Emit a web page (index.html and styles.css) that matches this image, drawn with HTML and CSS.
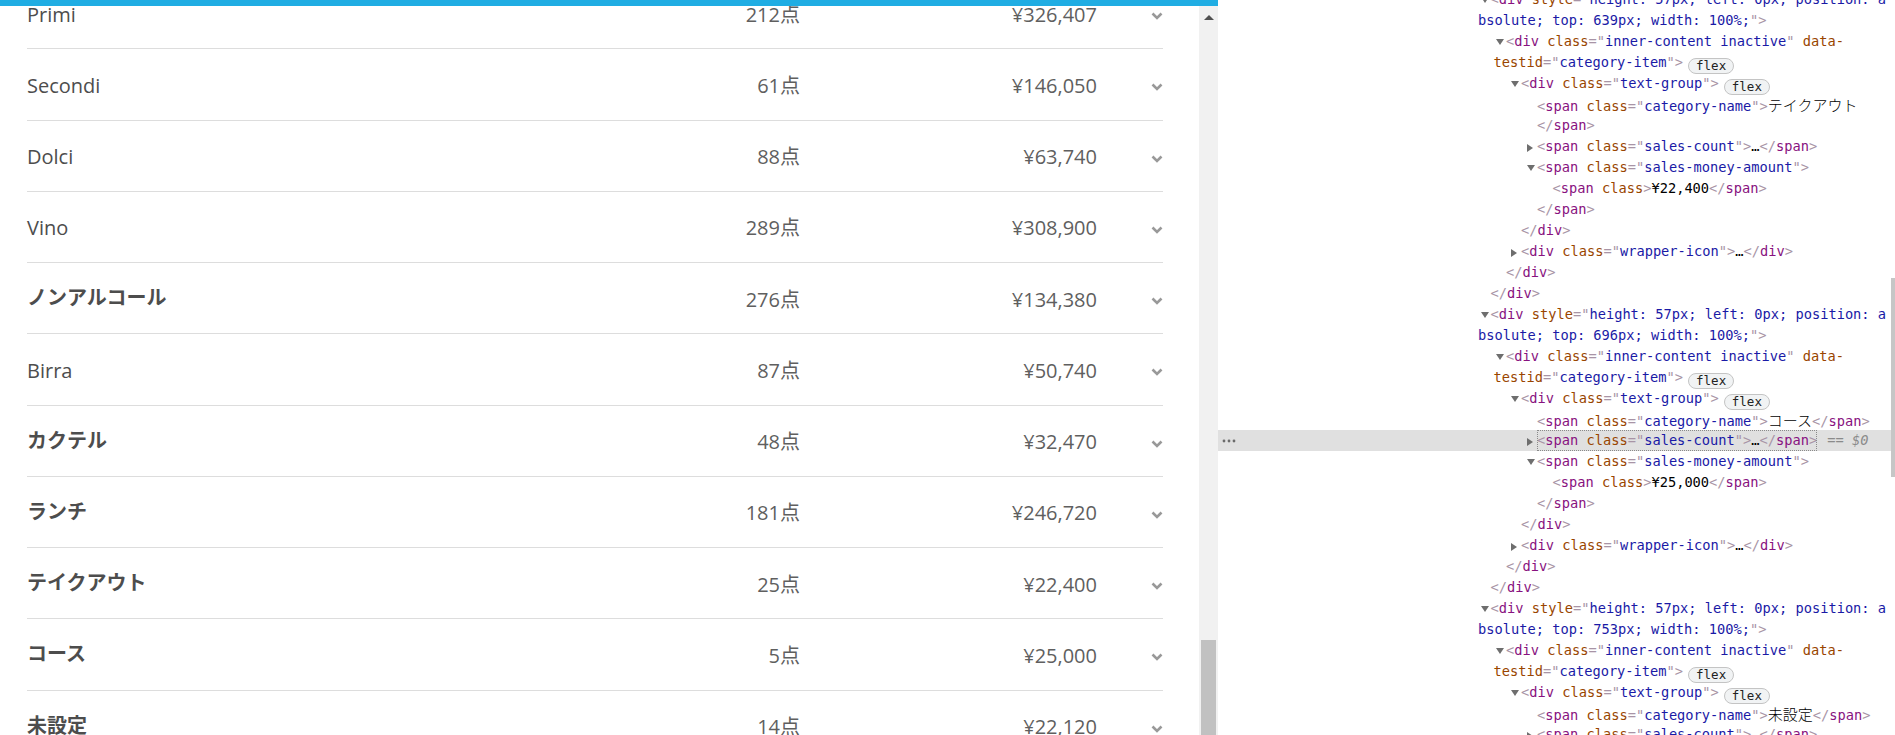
FILE: index.html
```html
<!DOCTYPE html>
<html lang="ja">
<head>
<meta charset="utf-8">
<title>Categories</title>
<link rel="stylesheet" href="styles.css">
</head>
<body>
<div class="app">
  <section class="pane-list">
    <div class="topbar"></div>
    <div class="list-body">
      <div class="list-viewport">
        <ul class="category-list">
          <li class="category-row"><span class="cat-name">Primi</span><span class="cat-count">212点</span><span class="cat-amount">¥326,407</span><span class="cat-icon"><svg width="12" height="8" viewBox="0 0 12 8"><polyline points="1.5,1.5 6,6 10.5,1.5" /></svg></span></li>
          <li class="category-row"><span class="cat-name">Secondi</span><span class="cat-count">61点</span><span class="cat-amount">¥146,050</span><span class="cat-icon"><svg width="12" height="8" viewBox="0 0 12 8"><polyline points="1.5,1.5 6,6 10.5,1.5" /></svg></span></li>
          <li class="category-row"><span class="cat-name">Dolci</span><span class="cat-count">88点</span><span class="cat-amount">¥63,740</span><span class="cat-icon"><svg width="12" height="8" viewBox="0 0 12 8"><polyline points="1.5,1.5 6,6 10.5,1.5" /></svg></span></li>
          <li class="category-row"><span class="cat-name">Vino</span><span class="cat-count">289点</span><span class="cat-amount">¥308,900</span><span class="cat-icon"><svg width="12" height="8" viewBox="0 0 12 8"><polyline points="1.5,1.5 6,6 10.5,1.5" /></svg></span></li>
          <li class="category-row"><span class="cat-name cat-name--ja">ノンアルコール</span><span class="cat-count">276点</span><span class="cat-amount">¥134,380</span><span class="cat-icon"><svg width="12" height="8" viewBox="0 0 12 8"><polyline points="1.5,1.5 6,6 10.5,1.5" /></svg></span></li>
          <li class="category-row"><span class="cat-name">Birra</span><span class="cat-count">87点</span><span class="cat-amount">¥50,740</span><span class="cat-icon"><svg width="12" height="8" viewBox="0 0 12 8"><polyline points="1.5,1.5 6,6 10.5,1.5" /></svg></span></li>
          <li class="category-row"><span class="cat-name cat-name--ja">カクテル</span><span class="cat-count">48点</span><span class="cat-amount">¥32,470</span><span class="cat-icon"><svg width="12" height="8" viewBox="0 0 12 8"><polyline points="1.5,1.5 6,6 10.5,1.5" /></svg></span></li>
          <li class="category-row"><span class="cat-name cat-name--ja">ランチ</span><span class="cat-count">181点</span><span class="cat-amount">¥246,720</span><span class="cat-icon"><svg width="12" height="8" viewBox="0 0 12 8"><polyline points="1.5,1.5 6,6 10.5,1.5" /></svg></span></li>
          <li class="category-row"><span class="cat-name cat-name--ja">テイクアウト</span><span class="cat-count">25点</span><span class="cat-amount">¥22,400</span><span class="cat-icon"><svg width="12" height="8" viewBox="0 0 12 8"><polyline points="1.5,1.5 6,6 10.5,1.5" /></svg></span></li>
          <li class="category-row"><span class="cat-name cat-name--ja">コース</span><span class="cat-count">5点</span><span class="cat-amount">¥25,000</span><span class="cat-icon"><svg width="12" height="8" viewBox="0 0 12 8"><polyline points="1.5,1.5 6,6 10.5,1.5" /></svg></span></li>
          <li class="category-row"><span class="cat-name cat-name--ja">未設定</span><span class="cat-count">14点</span><span class="cat-amount">¥22,120</span><span class="cat-icon"><svg width="12" height="8" viewBox="0 0 12 8"><polyline points="1.5,1.5 6,6 10.5,1.5" /></svg></span></li>
        </ul>
      </div>
      <div class="scrollbar">
        <div class="sb-button"><svg width="10" height="5" viewBox="0 0 10 5"><polygon points="0,5 5,0 10,5" /></svg></div>
        <div class="sb-space"></div>
        <div class="sb-thumb"></div>
      </div>
    </div>
  </section>

  <section class="pane-devtools">
    <div class="dt-code">
<div class="dt-line lv-a"><span class="tw"><svg width="8" height="6" viewBox="0 0 8 6"><polygon points="0,0 8,0 4,6"/></svg></span><span class="b">&lt;</span><span class="t">div</span> <span class="an">style</span><span class="b">="</span><span class="av">height: 57px; left: 0px; position: a</span></div>
<div class="dt-line lv-aw"><span class="av">bsolute; top: 639px; width: 100%;</span><span class="b">"&gt;</span></div>
<div class="dt-line lv-b"><span class="tw"><svg width="8" height="6" viewBox="0 0 8 6"><polygon points="0,0 8,0 4,6"/></svg></span><span class="b">&lt;</span><span class="t">div</span> <span class="an">class</span><span class="b">="</span><span class="av">inner-content inactive</span><span class="b">"</span> <span class="an">data-</span></div>
<div class="dt-line lv-bw"><span class="an">testid</span><span class="b">="</span><span class="av">category-item</span><span class="b">"&gt;</span><span class="badge">flex</span></div>
<div class="dt-line lv-c"><span class="tw"><svg width="8" height="6" viewBox="0 0 8 6"><polygon points="0,0 8,0 4,6"/></svg></span><span class="b">&lt;</span><span class="t">div</span> <span class="an">class</span><span class="b">="</span><span class="av">text-group</span><span class="b">"&gt;</span><span class="badge">flex</span></div>
<div class="dt-line lv-d"><span class="b">&lt;</span><span class="t">span</span> <span class="an">class</span><span class="b">="</span><span class="av">category-name</span><span class="b">"&gt;</span><span class="tx ja">テイクアウト</span></div>
<div class="dt-line lv-d"><span class="b">&lt;/</span><span class="t">span</span><span class="b">&gt;</span></div>
<div class="dt-line lv-d"><span class="tw"><svg width="6" height="8" viewBox="0 0 6 8"><polygon points="0,0 6,4 0,8"/></svg></span><span class="b">&lt;</span><span class="t">span</span> <span class="an">class</span><span class="b">="</span><span class="av">sales-count</span><span class="b">"&gt;</span><span class="tx">…</span><span class="b">&lt;/</span><span class="t">span</span><span class="b">&gt;</span></div>
<div class="dt-line lv-d"><span class="tw"><svg width="8" height="6" viewBox="0 0 8 6"><polygon points="0,0 8,0 4,6"/></svg></span><span class="b">&lt;</span><span class="t">span</span> <span class="an">class</span><span class="b">="</span><span class="av">sales-money-amount</span><span class="b">"&gt;</span></div>
<div class="dt-line lv-e"><span class="b">&lt;</span><span class="t">span</span> <span class="an">class</span><span class="b">&gt;</span><span class="tx">¥22,400</span><span class="b">&lt;/</span><span class="t">span</span><span class="b">&gt;</span></div>
<div class="dt-line lv-d"><span class="b">&lt;/</span><span class="t">span</span><span class="b">&gt;</span></div>
<div class="dt-line lv-c"><span class="b">&lt;/</span><span class="t">div</span><span class="b">&gt;</span></div>
<div class="dt-line lv-c"><span class="tw"><svg width="6" height="8" viewBox="0 0 6 8"><polygon points="0,0 6,4 0,8"/></svg></span><span class="b">&lt;</span><span class="t">div</span> <span class="an">class</span><span class="b">="</span><span class="av">wrapper-icon</span><span class="b">"&gt;</span><span class="tx">…</span><span class="b">&lt;/</span><span class="t">div</span><span class="b">&gt;</span></div>
<div class="dt-line lv-b"><span class="b">&lt;/</span><span class="t">div</span><span class="b">&gt;</span></div>
<div class="dt-line lv-a"><span class="b">&lt;/</span><span class="t">div</span><span class="b">&gt;</span></div>
<div class="dt-line lv-a"><span class="tw"><svg width="8" height="6" viewBox="0 0 8 6"><polygon points="0,0 8,0 4,6"/></svg></span><span class="b">&lt;</span><span class="t">div</span> <span class="an">style</span><span class="b">="</span><span class="av">height: 57px; left: 0px; position: a</span></div>
<div class="dt-line lv-aw"><span class="av">bsolute; top: 696px; width: 100%;</span><span class="b">"&gt;</span></div>
<div class="dt-line lv-b"><span class="tw"><svg width="8" height="6" viewBox="0 0 8 6"><polygon points="0,0 8,0 4,6"/></svg></span><span class="b">&lt;</span><span class="t">div</span> <span class="an">class</span><span class="b">="</span><span class="av">inner-content inactive</span><span class="b">"</span> <span class="an">data-</span></div>
<div class="dt-line lv-bw"><span class="an">testid</span><span class="b">="</span><span class="av">category-item</span><span class="b">"&gt;</span><span class="badge">flex</span></div>
<div class="dt-line lv-c"><span class="tw"><svg width="8" height="6" viewBox="0 0 8 6"><polygon points="0,0 8,0 4,6"/></svg></span><span class="b">&lt;</span><span class="t">div</span> <span class="an">class</span><span class="b">="</span><span class="av">text-group</span><span class="b">"&gt;</span><span class="badge">flex</span></div>
<div class="dt-line lv-d"><span class="b">&lt;</span><span class="t">span</span> <span class="an">class</span><span class="b">="</span><span class="av">category-name</span><span class="b">"&gt;</span><span class="tx ja">コース</span><span class="b">&lt;/</span><span class="t">span</span><span class="b">&gt;</span></div>
<div class="dt-line dt-line--selected"><span class="dt-gutter"><svg width="14" height="4" viewBox="0 0 14 4"><circle cx="2" cy="2" r="1.4"/><circle cx="7" cy="2" r="1.4"/><circle cx="12" cy="2" r="1.4"/></svg></span><span class="tw"><svg width="6" height="8" viewBox="0 0 6 8"><polygon points="0,0 6,4 0,8"/></svg></span><span class="dt-node"><span class="b">&lt;</span><span class="t">span</span> <span class="an">class</span><span class="b">="</span><span class="av">sales-count</span><span class="b">"&gt;</span><span class="tx">…</span><span class="b">&lt;/</span><span class="t">span</span><span class="b">&gt;</span></span><span class="dt-eq">== <i>$0</i></span></div>
<div class="dt-line lv-d"><span class="tw"><svg width="8" height="6" viewBox="0 0 8 6"><polygon points="0,0 8,0 4,6"/></svg></span><span class="b">&lt;</span><span class="t">span</span> <span class="an">class</span><span class="b">="</span><span class="av">sales-money-amount</span><span class="b">"&gt;</span></div>
<div class="dt-line lv-e"><span class="b">&lt;</span><span class="t">span</span> <span class="an">class</span><span class="b">&gt;</span><span class="tx">¥25,000</span><span class="b">&lt;/</span><span class="t">span</span><span class="b">&gt;</span></div>
<div class="dt-line lv-d"><span class="b">&lt;/</span><span class="t">span</span><span class="b">&gt;</span></div>
<div class="dt-line lv-c"><span class="b">&lt;/</span><span class="t">div</span><span class="b">&gt;</span></div>
<div class="dt-line lv-c"><span class="tw"><svg width="6" height="8" viewBox="0 0 6 8"><polygon points="0,0 6,4 0,8"/></svg></span><span class="b">&lt;</span><span class="t">div</span> <span class="an">class</span><span class="b">="</span><span class="av">wrapper-icon</span><span class="b">"&gt;</span><span class="tx">…</span><span class="b">&lt;/</span><span class="t">div</span><span class="b">&gt;</span></div>
<div class="dt-line lv-b"><span class="b">&lt;/</span><span class="t">div</span><span class="b">&gt;</span></div>
<div class="dt-line lv-a"><span class="b">&lt;/</span><span class="t">div</span><span class="b">&gt;</span></div>
<div class="dt-line lv-a"><span class="tw"><svg width="8" height="6" viewBox="0 0 8 6"><polygon points="0,0 8,0 4,6"/></svg></span><span class="b">&lt;</span><span class="t">div</span> <span class="an">style</span><span class="b">="</span><span class="av">height: 57px; left: 0px; position: a</span></div>
<div class="dt-line lv-aw"><span class="av">bsolute; top: 753px; width: 100%;</span><span class="b">"&gt;</span></div>
<div class="dt-line lv-b"><span class="tw"><svg width="8" height="6" viewBox="0 0 8 6"><polygon points="0,0 8,0 4,6"/></svg></span><span class="b">&lt;</span><span class="t">div</span> <span class="an">class</span><span class="b">="</span><span class="av">inner-content inactive</span><span class="b">"</span> <span class="an">data-</span></div>
<div class="dt-line lv-bw"><span class="an">testid</span><span class="b">="</span><span class="av">category-item</span><span class="b">"&gt;</span><span class="badge">flex</span></div>
<div class="dt-line lv-c"><span class="tw"><svg width="8" height="6" viewBox="0 0 8 6"><polygon points="0,0 8,0 4,6"/></svg></span><span class="b">&lt;</span><span class="t">div</span> <span class="an">class</span><span class="b">="</span><span class="av">text-group</span><span class="b">"&gt;</span><span class="badge">flex</span></div>
<div class="dt-line lv-d"><span class="b">&lt;</span><span class="t">span</span> <span class="an">class</span><span class="b">="</span><span class="av">category-name</span><span class="b">"&gt;</span><span class="tx ja">未設定</span><span class="b">&lt;/</span><span class="t">span</span><span class="b">&gt;</span></div>
<div class="dt-line lv-d"><span class="tw"><svg width="6" height="8" viewBox="0 0 6 8"><polygon points="0,0 6,4 0,8"/></svg></span><span class="b">&lt;</span><span class="t">span</span> <span class="an">class</span><span class="b">="</span><span class="av">sales-count</span><span class="b">"&gt;</span><span class="tx">…</span><span class="b">&lt;/</span><span class="t">span</span><span class="b">&gt;</span></div>
    </div>
    <div class="dt-scroll"><div class="dt-thumb"></div></div>
  </section>
</div>
</body>
</html>
```

FILE: styles.css
```css
* { box-sizing: border-box; }

html, body {
  margin: 0;
  padding: 0;
  background: #ffffff;
  overflow: hidden;
}

.app {
  display: flex;
  width: 1895px;
  height: 735px;
  overflow: hidden;
}

/* ---------- left: category list ---------- */
.pane-list {
  flex: none;
  width: 1218px;
  display: flex;
  flex-direction: column;
  height: 100%;
}

.topbar {
  flex: none;
  height: 6px;
  background: #20ade3;
}

.list-body {
  flex: 1;
  display: flex;
  min-height: 0;
}

.list-viewport {
  flex: 1;
  overflow: hidden;
}

.category-list {
  list-style: none;
  margin: -28px 0 0 0;
  padding: 0 36px 0 27px;
  font-family: "Open Sans", "Noto Sans CJK JP", sans-serif;
  font-size: 20px;
  line-height: 28px;
}

.category-row {
  display: grid;
  grid-template-columns: 1fr 150px 297px 66px;
  align-items: center;
  height: 71.25px;
  padding-top: 3px;
  border-bottom: 1px solid #dddddd;
}

.cat-name {
  color: #4d4d4d;
  font-weight: 500;
  white-space: nowrap;
}

.cat-name--ja {
  font-family: "Noto Sans CJK JP", sans-serif;
  font-weight: 700;
  margin-bottom: 5px;
}

.cat-count,
.cat-amount {
  text-align: right;
  color: #5f5f5f;
  white-space: nowrap;
}

.cat-icon {
  justify-self: end;
  display: flex;
  margin-top: 3px;
}

.cat-icon svg polyline {
  fill: none;
  stroke: #999999;
  stroke-width: 2.6;
}

.scrollbar {
  flex: none;
  width: 19px;
  background: #f1f1f1;
  display: flex;
  flex-direction: column;
}

.sb-button {
  flex: none;
  height: 22px;
  display: flex;
  align-items: center;
  justify-content: center;
}

.sb-button svg polygon { fill: #505050; }

.sb-space { flex: 1; }

.sb-thumb {
  flex: none;
  height: 95px;
  margin: 0 2px;
  background: #c1c1c1;
}

/* ---------- right: devtools ---------- */
.pane-devtools {
  flex: 1;
  display: flex;
  min-width: 0;
  background: #ffffff;
}

.dt-code {
  flex: 1;
  min-width: 0;
  overflow: hidden;
  margin-top: -11px;
  font-family: "DejaVu Sans Mono", "Noto Sans CJK JP", monospace;
  font-size: 13.7px;
  line-height: 21px;
  color: #000000;
}

.dt-line {
  height: 21px;
  white-space: pre;
}

.lv-a  { padding-left: 272.5px; }
.lv-aw { padding-left: 260px; }
.lv-b  { padding-left: 288px; }
.lv-bw { padding-left: 275.5px; }
.lv-c  { padding-left: 303px; }
.lv-d  { padding-left: 319px; }
.lv-e  { padding-left: 334.5px; }

.dt-line--selected {
  padding-left: 4px;
  background: #e0e0e0;
}

.dt-gutter {
  display: inline-block;
  width: 315px;
  vertical-align: top;
}

.dt-gutter svg {
  display: block;
  margin-top: 9px;
}

.dt-gutter svg circle { fill: #6b6b6b; }

.tw {
  display: inline-block;
  width: 10px;
  margin-left: -10px;
  vertical-align: top;
  height: 21px;
}

.tw svg {
  display: block;
  margin-top: 8px;
}

.tw svg polygon { fill: #6e6e6e; }

.b  { color: #a894a6; }
.t  { color: #881280; }
.an { color: #994500; }
.av { color: #1a1aa6; }
.tx { color: #000000; }
.ja { font-family: "Noto Sans CJK JP", sans-serif; font-size: 15px; font-weight: 300; }

.dt-node {
  display: inline-block;
  height: 21px;
  outline: 1px dotted #8a8a8a;
  outline-offset: -1px;
  vertical-align: top;
}

.dt-eq {
  margin-left: 10px;
  color: #8a8a8a;
}

.dt-eq i { font-style: italic; }

.badge {
  display: inline-block;
  margin-left: 5px;
  padding: 0 7px;
  height: 16px;
  line-height: 14px;
  border: 1px solid #c4c4c4;
  border-radius: 8px;
  background: #f1f3f4;
  color: #222222;
  font-family: "DejaVu Sans Mono", monospace;
  font-size: 12.5px;
  vertical-align: -3px;
}

.dt-scroll {
  flex: none;
  width: 4px;
}

.dt-thumb {
  margin-top: 278px;
  height: 199px;
  background: #c6c6c6;
}
```
